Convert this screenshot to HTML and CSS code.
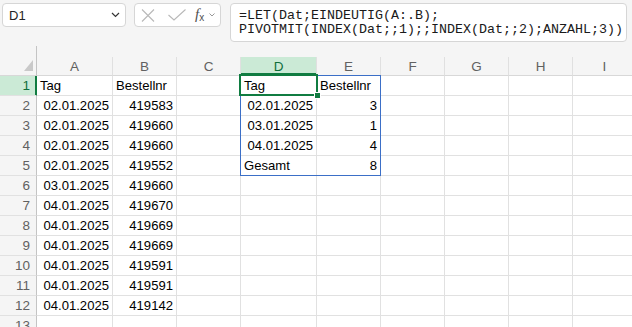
FILE: index.html
```html
<!DOCTYPE html>
<html lang="de">
<head>
  <meta charset="UTF-8" />
  <title>Mappe1 - Excel</title>
  <link rel="stylesheet" href="styles.css">
</head>
<body>
  <div class="toolbar">
    <div class="name-box">
      <span>D1</span>
      <svg class="chev" width="9" height="6" viewBox="0 0 9 6"><polyline points="1,1 4.5,4.5 8,1" fill="none" stroke="#333" stroke-width="1.2"/></svg>
    </div>
    <div class="fn-box">
      <svg class="ico" width="14" height="13" viewBox="0 0 14 13"><path d="M1 0.5 L13 12.5 M13 0.5 L1 12.5" stroke="#b8b8b8" stroke-width="1.1" fill="none"/></svg>
      <svg class="ico" width="18" height="12" viewBox="0 0 18 12"><polyline points="0.5,6 6,11 17.5,0.5" stroke="#b8b8b8" stroke-width="1.1" fill="none"/></svg>
      <span class="fx">f<sub>x</sub></span>
      <svg class="chev-sm" width="6" height="4" viewBox="0 0 6 4"><polyline points="0.5,0.5 3,3 5.5,0.5" fill="none" stroke="#999" stroke-width="1"/></svg>
    </div>
    <div class="formula">=LET(Dat;EINDEUTIG(A:.B);<br>PIVOTMIT(INDEX(Dat;;1);;INDEX(Dat;;2);ANZAHL;3))</div>
  </div>

  <div class="sheet">
    <div class="gap"><div class="gap-corner"></div></div>
    <div class="grid">
      <!-- column headers -->
      <div class="corner"><svg width="9" height="11" viewBox="0 0 9 11"><polygon points="9,0 9,11 0,11" fill="#c9c9c9"/></svg></div>
      <div class="ch">A</div><div class="ch">B</div><div class="ch">C</div><div class="ch sel">D</div>
      <div class="ch">E</div><div class="ch">F</div><div class="ch">G</div><div class="ch">H</div><div class="ch">I</div>

      <div class="rh sel">1</div>
      <div class="c">Tag</div><div class="c">Bestellnr</div><div class="c"></div>
      <div class="c">Tag</div><div class="c">Bestellnr</div><div class="c"></div><div class="c"></div><div class="c"></div><div class="c"></div>

      <div class="rh">2</div>
      <div class="c r">02.01.2025</div><div class="c r">419583</div><div class="c"></div>
      <div class="c r">02.01.2025</div><div class="c r">3</div><div class="c"></div><div class="c"></div><div class="c"></div><div class="c"></div>

      <div class="rh">3</div>
      <div class="c r">02.01.2025</div><div class="c r">419660</div><div class="c"></div>
      <div class="c r">03.01.2025</div><div class="c r">1</div><div class="c"></div><div class="c"></div><div class="c"></div><div class="c"></div>

      <div class="rh">4</div>
      <div class="c r">02.01.2025</div><div class="c r">419660</div><div class="c"></div>
      <div class="c r">04.01.2025</div><div class="c r">4</div><div class="c"></div><div class="c"></div><div class="c"></div><div class="c"></div>

      <div class="rh">5</div>
      <div class="c r">02.01.2025</div><div class="c r">419552</div><div class="c"></div>
      <div class="c">Gesamt</div><div class="c r">8</div><div class="c"></div><div class="c"></div><div class="c"></div><div class="c"></div>

      <div class="rh">6</div>
      <div class="c r">03.01.2025</div><div class="c r">419660</div><div class="c"></div>
      <div class="c"></div><div class="c"></div><div class="c"></div><div class="c"></div><div class="c"></div><div class="c"></div>

      <div class="rh">7</div>
      <div class="c r">04.01.2025</div><div class="c r">419670</div><div class="c"></div>
      <div class="c"></div><div class="c"></div><div class="c"></div><div class="c"></div><div class="c"></div><div class="c"></div>

      <div class="rh">8</div>
      <div class="c r">04.01.2025</div><div class="c r">419669</div><div class="c"></div>
      <div class="c"></div><div class="c"></div><div class="c"></div><div class="c"></div><div class="c"></div><div class="c"></div>

      <div class="rh">9</div>
      <div class="c r">04.01.2025</div><div class="c r">419669</div><div class="c"></div>
      <div class="c"></div><div class="c"></div><div class="c"></div><div class="c"></div><div class="c"></div><div class="c"></div>

      <div class="rh">10</div>
      <div class="c r">04.01.2025</div><div class="c r">419591</div><div class="c"></div>
      <div class="c"></div><div class="c"></div><div class="c"></div><div class="c"></div><div class="c"></div><div class="c"></div>

      <div class="rh">11</div>
      <div class="c r">04.01.2025</div><div class="c r">419591</div><div class="c"></div>
      <div class="c"></div><div class="c"></div><div class="c"></div><div class="c"></div><div class="c"></div><div class="c"></div>

      <div class="rh">12</div>
      <div class="c r">04.01.2025</div><div class="c r">419142</div><div class="c"></div>
      <div class="c"></div><div class="c"></div><div class="c"></div><div class="c"></div><div class="c"></div><div class="c"></div>

      <div class="rh">13</div>
      <div class="c"></div><div class="c"></div><div class="c"></div>
      <div class="c"></div><div class="c"></div><div class="c"></div><div class="c"></div><div class="c"></div><div class="c"></div>

      <!-- spill range and active cell -->
      <div class="spill"></div>
      <div class="active"></div>
      <div class="handle"></div>
    </div>
  </div>
</body>
</html>
```

FILE: styles.css
```css
* {
  box-sizing: border-box;
}

body {
  margin: 0;
  width: 632px;
  height: 327px;
  overflow: hidden;
  background: #f5f5f5;
  font-family: "Liberation Sans", Arial, sans-serif;
  color: #000;
}

/* Formula bar */
.toolbar {
  display: flex;
  align-items: flex-start;
  height: 46px;
  padding: 3px 0 0 2px;
}

.name-box {
  display: flex;
  align-items: center;
  justify-content: space-between;
  width: 124px;
  height: 24px;
  padding: 0 5px 0 6px;
  background: white;
  border: 1px solid #d6d6d6;
  border-radius: 4px;
  font-size: 13px;
  color: #242424;
}

.fn-box {
  display: flex;
  align-items: center;
  width: 87px;
  height: 24px;
  margin-left: 8px;
  padding-left: 6px;
  background: white;
  border: 1px solid #d6d6d6;
  border-radius: 4px;
}

.fn-box .ico {
  margin-right: 13px;
}

.fn-box .ico + .ico {
  margin-right: 9px;
}

.fx {
  font-family: "Liberation Serif", "Times New Roman", serif;
  font-style: italic;
  font-size: 15px;
  color: #505050;
  line-height: 1;
}

.fx sub {
  font-size: 10px;
  font-style: normal;
  font-family: "Liberation Sans", Arial, sans-serif;
  vertical-align: -2px;
}

.chev-sm {
  margin-left: 5px;
}

.formula {
  width: 397px;
  height: 39px;
  margin-left: 9px;
  padding: 5px 0 0 8px;
  background: white;
  border: 1px solid #d6d6d6;
  border-radius: 4px;
  font-family: "Liberation Mono", "Courier New", monospace;
  font-size: 13.33px;
  line-height: 14px;
  color: #1a1a1a;
  white-space: nowrap;
}

/* Sheet */
.gap {
  height: 11px;
}

.gap-corner {
  width: 37px;
  height: 11px;
  border-right: 1px solid #c4c4c4;
}

.grid {
  position: relative;
  display: grid;
  grid-template-columns: 37px 76px 64px 64px 76px repeat(5, 64px);
  grid-template-rows: 19px repeat(13, 20px);
  width: 660px;
}

.corner,
.ch,
.rh {
  background: #f5f5f5;
  color: #616161;
  font-size: 13.5px;
  border-bottom: 1px solid #d8d8d8;
}

.corner {
  display: flex;
  justify-content: flex-end;
  align-items: flex-end;
  padding: 0 3px 4px 0;
  border-right: 1px solid #c4c4c4;
}

.ch {
  display: flex;
  align-items: center;
  justify-content: center;
  border-right: 1px solid #e0e0e0;
}

.rh {
  display: flex;
  align-items: center;
  justify-content: flex-end;
  padding-right: 6px;
  border-bottom-color: #e1e1e1;
  border-right: 1px solid #c4c4c4;
}

.ch.sel {
  background: #cbead6;
  color: #0e6e3a;
  box-shadow: inset 0 -2px 0 #107c41;
}

.rh.sel {
  background: #cbead6;
  color: #0e6e3a;
  border-right-color: #107c41;
  box-shadow: inset -1px 0 0 #107c41;
}

.c {
  background: white;
  border-right: 1px solid #e1e1e1;
  border-bottom: 1px solid #e1e1e1;
  padding: 1px 3px 0 3px;
  font-size: 13.1px;
  line-height: 18px;
  white-space: nowrap;
  overflow: hidden;
}

.c.r {
  text-align: right;
}

.spill {
  position: absolute;
  left: 240px;
  top: 18px;
  width: 141px;
  height: 101px;
  border: 1px solid #3b6fc7;
}

.active {
  position: absolute;
  left: 239px;
  top: 17px;
  width: 79px;
  height: 22px;
  border: 2px solid #107c41;
}

.handle {
  position: absolute;
  left: 314px;
  top: 35px;
  width: 7px;
  height: 7px;
  background: #107c41;
  border: 1px solid white;
}
```
